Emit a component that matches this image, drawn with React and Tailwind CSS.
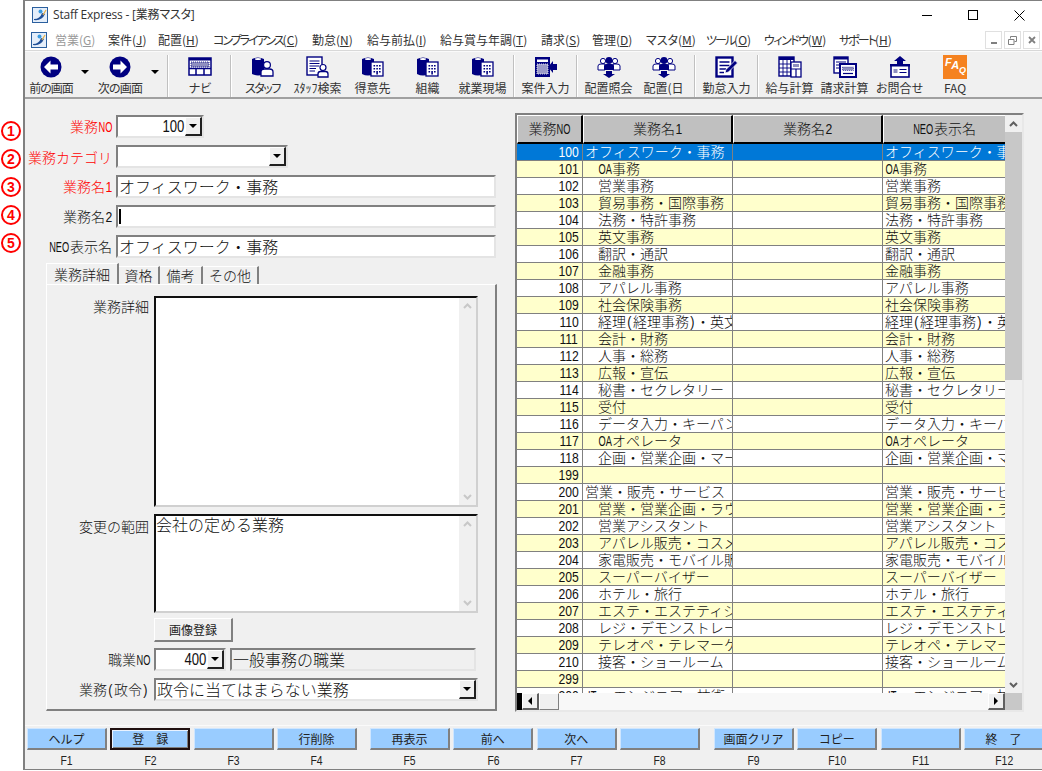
import React from 'react';

const N = '#000080';
const LATIN = "font-['Liberation_Sans',sans-serif] font-normal";

function Mix({ text }) {
  const parts = text.split(/([0-9]+|[A-Z]+|[()]+)/).filter(Boolean);
  return (
    <>
      {parts.map((p, i) => {
        const digit = /^[0-9]+$/.test(p);
        const upper = /^[A-Z]+$/.test(p);
        const paren = /^[()]+$/.test(p);
        if (!digit && !upper && !paren) return <span key={i}>{p}</span>;
        const scale = digit ? 'scale-x-[.87]' : upper ? 'scale-x-[.66]' : 'scale-x-[.9]';
        return (
          <span key={i} className="inline-flex justify-center" style={{ width: p.length * (digit ? 6.9 : 7) }}>
            <span className={`inline-block whitespace-nowrap ${LATIN} ${scale}`}>{p}</span>
          </span>
        );
      })}
    </>
  );
}

const Cyl = () => (
  <>
    <path d="M1 3 Q7 0 13 3 V18 Q7 21 1 18 Z" fill={N} />
    <path d="M4 2.5 Q7 1.5 10 2.5 L10 3.5 Q7 4.5 4 3.5 Z" fill="#fff" />
  </>
);
const Person = () => (
  <>
    <circle cx="16" cy="9" r="3.4" fill="#fff" stroke={N} strokeWidth="1.2" />
    <path d="M10 20 V16 Q10 13 13.5 13 H18.5 Q22 13 22 16 V20 Z" fill="#fff" stroke={N} strokeWidth="1.3" />
  </>
);
const Bldg = () => (
  <>
    <rect x="10" y="6" width="12" height="14" fill="#fff" stroke={N} strokeWidth="1.3" />
    <path d="M12.5 9h1.6v1.6h-1.6zM15.3 9h1.6v1.6h-1.6zM18 9h1.6v1.6H18zM12.5 12h1.6v1.6h-1.6zM15.3 12h1.6v1.6h-1.6zM18 12h1.6v1.6H18zM12.5 15h1.6v1.6h-1.6zM15.3 15h1.6v3.4h-1.6zM18 15h1.6v1.6H18z" fill={N} />
  </>
);
const Group = () => (
  <>
    <circle cx="6" cy="5" r="2.6" fill="#fff" stroke={N} />
    <circle cx="18" cy="5" r="2.6" fill="#fff" stroke={N} />
    <path d="M1 14 V10 Q1 8 4 8 H8 V14 ZM16 8 H20 Q23 8 23 10 V14 H16 Z" fill="#fff" stroke={N} />
    <circle cx="12" cy="4.5" r="3.4" fill={N} />
    <path d="M7 14 V10 Q7 8 9.5 8 H14.5 Q17 8 17 10 V14 Z" fill={N} />
    <path d="M9 15 H15 V18 H18 L12 22 L6 18 H9 Z" fill={N} />
  </>
);
const Svg = ({ w = 24, h = 22, vb = '0 0 24 22', children }) => (
  <svg width={w} height={h} viewBox={vb} className="block">{children}</svg>
);

const icons = {
  back: (
    <Svg vb="0 0 22 22" w={22}>
      <circle cx="11" cy="11" r="10.5" fill={N} />
      <path d="M4 11 L10.5 4.5 V8.5 H18 V13.5 H10.5 V17.5 Z" fill="#fff" />
    </Svg>
  ),
  next: (
    <Svg vb="0 0 22 22" w={22}>
      <circle cx="11" cy="11" r="10.5" fill={N} />
      <path d="M18 11 L11.5 4.5 V8.5 H4 V13.5 H11.5 V17.5 Z" fill="#fff" />
    </Svg>
  ),
  navi: (
    <Svg>
      <rect x="1" y="2" width="22" height="17" fill="#fff" stroke={N} strokeWidth="1.5" />
      <rect x="1" y="2" width="22" height="2.5" fill={N} />
      <rect x="3" y="6" width="18" height="5" fill="#8f8fc0" stroke={N} strokeWidth="0.8" strokeDasharray="1 1" />
      <path d="M1 12.5 H23 M8 12.5 V19 M16 12.5 V19" stroke={N} strokeWidth="1.5" />
    </Svg>
  ),
  staff: <Svg><Cyl /><Person /></Svg>,
  search: (
    <Svg>
      <rect x="1" y="1" width="15" height="18" fill="#fff" stroke={N} strokeWidth="1.4" />
      <path d="M3.5 5H13.5M3.5 7.5H13.5M3.5 10H13.5M3.5 12.5H10M3.5 15H9" stroke={N} strokeWidth="1.1" />
      <circle cx="17" cy="11.5" r="3" fill="#fff" stroke={N} strokeWidth="1.2" />
      <path d="M12 21 V18 Q12 15.5 14.5 15.5 H19.5 Q22 15.5 22 18 V21 Z" fill="#fff" stroke={N} strokeWidth="1.3" />
    </Svg>
  ),
  bldg: <Svg><Cyl /><Bldg /></Svg>,
  input: (
    <Svg>
      <rect x="1" y="1" width="15" height="20" fill={N} />
      <rect x="3" y="3.5" width="11" height="2.5" fill="#fff" />
      <rect x="3" y="8" width="11" height="10" fill="#9a9ac8" stroke="#fff" strokeWidth="0.8" strokeDasharray="1 1" />
      <path d="M23 8 H19 V5 L14 11 L19 17 V14 H23 Z" fill={N} />
    </Svg>
  ),
  group: <Svg><Group /></Svg>,
  edit: (
    <Svg>
      <rect x="1.5" y="1.5" width="16" height="19" fill="#fff" stroke={N} strokeWidth="2.4" />
      <path d="M4.5 6H14.5M4.5 9.5H14.5M4.5 13H11M4.5 16.5H9" stroke={N} strokeWidth="1.6" />
      <path d="M10 17 L11 13.5 L20 4.5 L22.5 7 L13.5 16 Z" fill={N} stroke="#fff" strokeWidth="0.7" />
    </Svg>
  ),
  calc: (
    <Svg>
      <rect x="1" y="1" width="15" height="19" fill="#fff" stroke={N} strokeWidth="1.4" />
      <rect x="1" y="1" width="15" height="3" fill={N} />
      <path d="M1 8H16M1 12H16M1 16H16M5 4V20M9 4V20M12.5 4V20" stroke={N} strokeWidth="0.9" />
      <rect x="13" y="6" width="10" height="15" fill="#fff" stroke={N} strokeWidth="1.3" />
      <rect x="15" y="8" width="6" height="3" fill="#8f8fc0" />
      <path d="M13 13H23M18 13V21" stroke={N} strokeWidth="1.2" />
    </Svg>
  ),
  invoice: (
    <Svg>
      <rect x="1" y="1" width="14" height="16" fill="#fff" stroke={N} strokeWidth="1.4" />
      <rect x="1" y="1" width="14" height="2.5" fill={N} />
      <path d="M3 6H13M3 9H8M3 12H8" stroke={N} strokeWidth="1" />
      <rect x="7" y="8" width="16" height="13" fill="#fff" stroke={N} strokeWidth="2" />
      <rect x="9.5" y="11" width="11" height="3.5" fill="#8f8fc0" stroke={N} strokeWidth="0.5" strokeDasharray="1 1" />
      <path d="M10 17.5H20" stroke={N} strokeWidth="1.2" />
    </Svg>
  ),
  ask: (
    <Svg>
      <path d="M12 0 L18 5 H15 V8 H9 V5 H6 Z" fill={N} />
      <rect x="3" y="9" width="18" height="12" fill="#fff" stroke={N} strokeWidth="1.6" />
      <rect x="2" y="8" width="20" height="2.5" fill={N} />
      <rect x="5.5" y="13" width="4" height="4" fill="#8f8fc0" />
      <path d="M11.5 13.5H18.5M11.5 16.5H18.5" stroke={N} strokeWidth="1.1" />
    </Svg>
  ),
};

const Logo = () => (
  <svg width="16" height="16" viewBox="0 0 16 16" className="block">
    <rect x="0.5" y="0.5" width="15" height="15" fill="#e4eefa" stroke="#2a5f9e" />
    <circle cx="8.5" cy="4.5" r="2" fill="#3a9be0" />
    <path d="M2 12 Q8 12 10 6 L13 7 Q10 14 2 13Z" fill="#1f4f98" />
    <path d="M11 8 L14 3" stroke="#e8b040" strokeWidth="1.2" />
  </svg>
);

function Tool({ icon, label, w = 'w-[55px]', tc = '' }) {
  return (
    <div className={`${w} flex flex-col items-center shrink-0`}>
      <div className="h-[24px] flex items-center justify-center">{icon}</div>
      <div className={`text-[12px] leading-[17px] text-[#333] whitespace-nowrap [font-feature-settings:'palt'] ${tc}`}>{label}</div>
    </div>
  );
}
const Sep = ({ cls = 'mx-[3px]' }) => <div className={`${cls} w-[2px] h-[42px] shrink-0 bg-[#c0c0c0] border-r border-white`} />;
const Drop = () => (
  <div className="w-[14px] h-[46px] shrink-0 flex items-center justify-center pb-[12px]">
    <div className="w-0 h-0 border-x-[4px] border-x-transparent border-t-[4px] border-t-black" />
  </div>
);

const menus = [
  ['案件', 'J', 'w-[50px]', ''],
  ['配置', 'H', 'w-[55px]', ''],
  ['コンプライアンス', 'C', 'w-[99px]', 'tracking-[-2px]'],
  ['勤怠', 'N', 'w-[55px]', ''],
  ['給与前払', 'I', 'w-[73px]', ''],
  ['給与賞与年調', 'T', 'w-[101px]', ''],
  ['請求', 'S', 'w-[51px]', ''],
  ['管理', 'D', 'w-[54px]', ''],
  ['マスタ', 'M', 'w-[60px]', ''],
  ['ツール', 'O', 'w-[58px]', 'tracking-[-2px]'],
  ['ウィンドウ', 'W', 'w-[75px]', 'tracking-[-1.5px]'],
  ['サポート', 'H', 'w-[60px]', 'tracking-[-2px]'],
];

const Inset = ({ className = '', children }) => (
  <div className={`border-2 border-t-[#808080] border-l-[#808080] border-r-[#e4e4e4] border-b-[#e4e4e4] ${className}`}>{children}</div>
);
const DropBtn = () => (
  <div className="w-[17px] self-stretch bg-[#f0f0f0] border-r-2 border-b-2 border-r-[#202020] border-b-[#202020] border-t border-l border-t-white border-l-white flex items-center justify-center shrink-0">
    <div className="w-0 h-0 border-x-[4px] border-x-transparent border-t-[4px] border-t-black" />
  </div>
);
const Label = ({ red, children, className = '' }) => (
  <div className={`text-[14px] leading-[20px] font-light whitespace-nowrap text-right ${red ? 'text-[#ff0000]' : 'text-[#111]'} ${className}`}>
    <Mix text={children} />
  </div>
);
const Row = ({ label, red, children }) => (
  <div className="flex items-center h-[23px]">
    <div className="w-[87px] flex justify-end"><Label red={red}>{label}</Label></div>
    <div className="ml-[4px] flex-1 h-full">{children}</div>
  </div>
);
const Chev = ({ up }) => (
  <svg width="9" height="6" viewBox="0 0 9 6" className="block">
    <path d={up ? 'M1 5 L4.5 1.5 L8 5' : 'M1 1 L4.5 4.5 L8 1'} fill="none" stroke="#c8c8c8" strokeWidth="2" />
  </svg>
);
const Memo = ({ className, text }) => (
  <div className={`flex w-[324px] bg-white border-2 border-t-[#101010] border-l-[#101010] border-r-[#d0d0d0] border-b-[#d0d0d0] ${className}`}>
    <div className="flex-1 text-[16px] leading-[16px] font-light text-[#111] whitespace-nowrap">{text}</div>
    <div className="w-[17px] bg-[#f0f0f0] flex flex-col items-center justify-between py-[5px]">
      <Chev up /><Chev />
    </div>
  </div>
);
const NumBox = ({ children }) => (
  <div className="flex-1 flex justify-end pr-[1px] text-[16px] leading-[19px] text-[#111]">
    <span className="inline-flex justify-center w-[22px]">
      <span className={`inline-block ${LATIN} scale-x-[.82]`}>{children}</span>
    </span>
  </div>
);

const rows = [
  ['100', 'オフィスワーク・事務', 0], ['101', 'OA事務'], ['102', '営業事務'], ['103', '貿易事務・国際事務'], ['104', '法務・特許事務'],
  ['105', '英文事務'], ['106', '翻訳・通訳'], ['107', '金融事務'], ['108', 'アパレル事務'], ['109', '社会保険事務'],
  ['110', '経理(経理事務)・英文経理'], ['111', '会計・財務'], ['112', '人事・総務'], ['113', '広報・宣伝'], ['114', '秘書・セクレタリー'],
  ['115', '受付'], ['116', 'データ入力・キーパンチ'], ['117', 'OAオペレータ'], ['118', '企画・営業企画・マーケティング'], ['199', ''],
  ['200', '営業・販売・サービス', 0], ['201', '営業・営業企画・ラウンダー'], ['202', '営業アシスタント'], ['203', 'アパレル販売・コスメ'],
  ['204', '家電販売・モバイル販売'], ['205', 'スーパーバイザー'], ['206', 'ホテル・旅行'], ['207', 'エステ・エステティシャン'],
  ['208', 'レジ・デモンストレーター'], ['209', 'テレオペ・テレマーケティング'], ['210', '接客・ショールーム'], ['299', ''],
  ['300', 'IT・エンジニア・技術', 0],
];

const Head = ({ w, children }) => (
  <div className={`${w} shrink-0 h-[29px] pb-[1px] bg-[#c0c0c0] border-t border-l border-t-white border-l-white border-r-2 border-b-2 border-r-black border-b-black flex items-center justify-center text-[14px] font-light text-[#111]`}>
    <span><Mix text={children} /></span>
  </div>
);

function GridRow({ no, name, indent, i }) {
  const bg = i === 0 ? 'bg-[#0078d7] text-white' : i % 2 === 1 ? 'bg-[#ffffcc] text-[#111]' : 'bg-white text-[#111]';
  return (
    <div className={`flex h-[17px] shrink-0 border-b border-[#808080] text-[14px] leading-[14px] font-light ${bg}`}>
      <div className="w-[66px] shrink-0 border-r border-[#808080] text-right pr-[3px]"><Mix text={no} /></div>
      <div className={`w-[150px] shrink-0 border-r border-[#808080] overflow-hidden whitespace-nowrap ${indent === 0 ? 'pl-[2px]' : 'pl-[15px]'}`}><Mix text={name} /></div>
      <div className="w-[150px] shrink-0 border-r border-[#808080]" />
      <div className="w-[124px] shrink-0 overflow-hidden whitespace-nowrap pl-[2px]"><Mix text={name} /></div>
    </div>
  );
}

const Arrow = ({ dir }) => (
  <div className="w-[17px] h-full shrink-0 bg-[#f0f0f0] border-t border-l border-t-white border-l-white border-r-2 border-b-2 border-r-[#606060] border-b-[#606060] flex items-center justify-center">
    <div className={dir === 'l'
      ? 'w-0 h-0 border-y-[4px] border-y-transparent border-r-[4px] border-r-black'
      : 'w-0 h-0 border-y-[4px] border-y-transparent border-l-[4px] border-l-black'} />
  </div>
);

function FKey({ label, f, active }) {
  return (
    <div className="w-[80px] shrink-0 flex flex-col items-center">
      <div className={`w-full h-[23px] bg-[#99ccff] flex items-center justify-center text-[12px] text-[#222] whitespace-pre ${active
        ? 'border-2 border-[#201010] shadow-[inset_1px_1px_0_#e8f2ff,inset_-1px_-1px_0_#808080]'
        : 'border-t border-l border-t-[#cfe6ff] border-l-[#cfe6ff] border-r-2 border-b-2 border-r-[#808080] border-b-[#808080]'}`}>{label}</div>
      <div className={`${LATIN} inline-block scale-x-[.8] text-[13px] leading-[17px] mt-[2px] text-[#222]`}>{f}</div>
    </div>
  );
}
const FGroup = ({ className = '', keys }) => (
  <div className={`flex gap-[3.33px] shrink-0 ${className}`}>
    {keys.map(([l, f, a]) => <FKey key={f} label={l} f={f} active={a} />)}
  </div>
);

const MdiBtn = ({ children }) => (
  <div className="w-[17px] h-[18px] border border-[#e0e0e0] flex items-center justify-center">{children}</div>
);

export default function App() {
  return (
    <div className="w-[1042px] h-[771px] flex bg-white overflow-hidden font-['Noto_Sans_CJK_JP',sans-serif]">
      <div className="w-[23px] shrink-0 pt-[121px] pl-[1px] flex flex-col gap-[8px]">
        {[1, 2, 3, 4, 5].map((n) => (
          <div key={n} className="w-[20px] h-[20px] rounded-full border-2 border-[#ff0000] text-[#ff0000] font-['Liberation_Sans'] font-bold text-[14px] leading-[16px] text-center">{n}</div>
        ))}
      </div>

      <div className="w-[1019px] h-[770px] flex flex-col bg-[#f0f0f0] border-t border-l-2 border-b border-[#808080] overflow-hidden">
        {/* title bar */}
        <div className="h-[27px] shrink-0 bg-white flex items-center pl-[7px] pt-[1px]">
          <Logo />
          <div className="ml-[5px] text-[12px] text-[#333] font-['Open_Sans','Noto_Sans_CJK_JP',sans-serif] tracking-[-0.2px] [font-feature-settings:'palt']">Staff Express - [業務マスタ]</div>
          <div className="ml-auto flex h-full">
            <div className="w-[46px] flex items-center justify-center">
              <div className="w-[10px] h-px bg-black" />
            </div>
            <div className="w-[46px] flex items-center justify-center">
              <div className="w-[10px] h-[10px] border border-black" />
            </div>
            <div className="w-[46px] flex items-center justify-center">
              <svg width="11" height="11" viewBox="0 0 11 11"><path d="M0.5 0.5L10.5 10.5M10.5 0.5L0.5 10.5" stroke="#000" /></svg>
            </div>
          </div>
        </div>
        {/* menu */}
        <div className="h-[23px] shrink-0 bg-white flex items-center pl-[6px] pt-[2px] text-[12px] text-[#333] [font-feature-settings:'palt'] border-b border-[#d8d8d8]">
          <Logo />
          <span className="ml-[8px] w-[53px] text-[#999] whitespace-nowrap">営業(<u>G</u>)</span>
          {menus.map(([a, b, w, t]) => (
            <span key={a} className={`${w} shrink-0 whitespace-nowrap`}><span className={t}>{a}</span>(<u>{b}</u>)</span>
          ))}
          <div className="ml-auto mr-[2px] flex gap-[2px]">
            <MdiBtn><div className="w-[6px] h-[2px] mt-[5px] bg-[#808080]" /></MdiBtn>
            <MdiBtn><svg width="9" height="9" viewBox="0 0 9 9"><path d="M2.5 2.5V.5H8.5V5.5H6.5M.5 3.5H6V8.5H.5Z" fill="none" stroke="#808080" /></svg></MdiBtn>
            <MdiBtn><svg width="8" height="8" viewBox="0 0 8 8"><path d="M1 1L7 7M7 1L1 7" stroke="#808080" strokeWidth="1.8" /></svg></MdiBtn>
          </div>
        </div>
        {/* toolbar */}
        <div className="h-[48px] shrink-0 flex items-start pt-[3px] pl-[1px] border-b-2 border-[#a0a0a0] bg-[#f0f0f0] border-t border-t-[#fafafa]">
          <Tool icon={icons.back} label="前の画面" w="w-[50px]" tc="tracking-[-1px]" />
          <div className="ml-[2px]"><Drop /></div>
          <div className="ml-[3px]"><Tool icon={icons.next} label="次の画面" w="w-[50px]" tc="tracking-[-0.8px]" /></div>
          <div className="ml-[3px]"><Drop /></div>
          <Sep cls="ml-[5px] mr-[1px]" />
          <Tool icon={icons.navi} label="ナビ" w="w-[60px]" />
          <Sep cls="mr-[3px]" />
          <Tool icon={icons.staff} label="スタッフ" tc="tracking-[-1.5px]" />
          <Tool icon={icons.search} label="ｽﾀｯﾌ検索" />
          <Tool icon={icons.bldg} label="得意先" />
          <Tool icon={icons.bldg} label="組織" />
          <Tool icon={icons.bldg} label="就業現場" />
          <Sep />
          <Tool icon={icons.input} label="案件入力" />
          <Sep />
          <Tool icon={icons.group} label="配置照会" />
          <Tool icon={icons.group} label="配置(日" />
          <Sep />
          <Tool icon={icons.edit} label="勤怠入力" />
          <Sep />
          <Tool icon={icons.calc} label="給与計算" />
          <Tool icon={icons.invoice} label="請求計算" />
          <Tool icon={icons.ask} label="お問合せ" />
          <Tool
            w="w-[56px]"
            label="FAQ"
            icon={
              <div className="w-[24px] h-[24px] bg-[#f58220] text-white font-['Liberation_Sans'] italic font-bold text-[11px] leading-[8px] pl-[2px] pt-[3px]">
                F<span className="relative top-[3px]">A</span><span className="relative top-[7px] text-[9px]">Q</span>
              </div>
            }
          />
        </div>
        {/* content */}
        <div className="flex-1 min-h-0 flex">
          <div className="w-[490px] shrink-0 pt-[16px] flex flex-col">
            <div className="flex flex-col gap-[7px]">
              <Row label="業務NO" red>
                <Inset className="w-[88px] h-full flex bg-white">
                  <NumBox>100</NumBox>
                  <DropBtn />
                </Inset>
              </Row>
              <Row label="業務カテゴリ" red>
                <Inset className="w-[172px] h-full flex bg-white">
                  <div className="flex-1" />
                  <DropBtn />
                </Inset>
              </Row>
              {[['業務名1', 'オフィスワーク・事務', true], ['業務名2', '', false], ['NEO表示名', 'オフィスワーク・事務', false]].map(([l, v, r], i) => (
                <Row key={l} label={l} red={r}>
                  <Inset className="w-[380px] h-full bg-white text-[16px] leading-[19px] font-light text-[#111] pl-[1px] whitespace-nowrap">
                    {i === 1 ? <div className="w-[2px] h-[15px] mt-[2px] bg-black" /> : v}
                  </Inset>
                </Row>
              ))}
            </div>
            {/* tabs */}
            <div className="ml-[21px] mt-[5px] flex items-end h-[21px] text-[14px] font-light text-[#111] relative z-10">
              <div className="w-[73px] h-[21px] bg-[#f0f0f0] border-t border-l border-t-white border-l-white border-r-2 border-r-[#808080] flex items-center justify-center">業務詳細</div>
              <div className="w-[41px] h-[18px] border-t border-t-white border-r-2 border-r-[#808080] flex items-center justify-center">資格</div>
              <div className="w-[43px] h-[18px] border-t border-t-white border-r-2 border-r-[#808080] flex items-center justify-center">備考</div>
              <div className="w-[56px] h-[18px] border-t border-t-white border-r-2 border-r-[#808080] flex items-center justify-center">その他</div>
            </div>
            {/* pane */}
            <div className="ml-[21px] w-[451px] h-[427px] border-t border-l border-t-white border-l-white border-r-2 border-b-2 border-r-[#808080] border-b-[#808080] flex flex-col pt-[11px]">
              <div className="flex">
                <Label className="w-[102px]">業務詳細</Label>
                <Memo className="ml-[5px] h-[211px]" text="" />
              </div>
              <div className="flex mt-[7px]">
                <Label className="w-[102px] pt-[2px]">変更の範囲</Label>
                <Memo className="ml-[5px] h-[99px]" text="会社の定める業務" />
              </div>
              <div className="ml-[107px] mt-[5px] w-[79px] h-[24px] bg-[#f0f0f0] border-t border-l border-t-white border-l-white border-r-2 border-b-2 border-r-[#808080] border-b-[#808080] flex items-center justify-center text-[12px] text-[#222]">画像登録</div>
              <div className="flex items-center h-[23px] mt-[6px]">
                <Label className="w-[103px]">職業NO</Label>
                <Inset className="ml-[4px] w-[72px] h-full flex bg-white">
                  <NumBox>400</NumBox>
                  <DropBtn />
                </Inset>
                <Inset className="ml-[4px] w-[246px] h-full text-[16px] leading-[18px] font-light text-[#111] pl-[1px] whitespace-nowrap">一般事務の職業</Inset>
              </div>
              <div className="flex items-center h-[23px] mt-[7px]">
                <Label className="w-[102px]">業務(政令)</Label>
                <Inset className="ml-[5px] w-[324px] h-full flex bg-white">
                  <div className="flex-1 text-[16px] leading-[18px] font-light text-[#111] pl-[1px] whitespace-nowrap">政令に当てはまらない業務</div>
                  <DropBtn />
                </Inset>
              </div>
            </div>
          </div>

          {/* grid */}
          <div className="mt-[14px] w-[509px] h-[599px] shrink-0 border-2 border-t-[#808080] border-l-[#808080] border-r-[#e8e8e8] border-b-[#e8e8e8] flex flex-col bg-white">
            <div className="flex-1 min-h-0 flex overflow-hidden">
              <div className="w-[488px] shrink-0 flex flex-col overflow-hidden">
                <div className="flex shrink-0">
                  <Head w="w-[66px]">業務NO</Head>
                  <Head w="w-[150px]">業務名1</Head>
                  <Head w="w-[150px]">業務名2</Head>
                  <Head w="w-[124px]">NEO表示名</Head>
                </div>
                {rows.map(([no, name, indent], i) => (
                  <GridRow key={no} no={no} name={name} indent={indent} i={i} />
                ))}
              </div>
              <div className="w-[17px] shrink-0 bg-[#f0f0f0] flex flex-col">
                <div className="h-[17px] flex items-center justify-center shrink-0">
                  <svg width="9" height="6" viewBox="0 0 9 6"><path d="M1 5 L4.5 1.5 L8 5" fill="none" stroke="#606060" strokeWidth="2" /></svg>
                </div>
                <div className="h-[248px] bg-[#c8c8c8] shrink-0" />
                <div className="mt-auto h-[17px] flex items-center justify-center shrink-0">
                  <svg width="9" height="6" viewBox="0 0 9 6"><path d="M1 1 L4.5 4.5 L8 1" fill="none" stroke="#606060" strokeWidth="2" /></svg>
                </div>
              </div>
            </div>
            <div className="h-[17px] shrink-0 flex bg-[#f8f8f8]">
              <div className="w-[5px] h-full bg-black shrink-0" />
              <Arrow dir="l" />
              <div className="w-[20px] h-full shrink-0 bg-[#f0f0f0] border-t border-l border-t-white border-l-white border-r border-b border-r-[#808080] border-b-[#808080]" />
              <div className="flex-1" />
              <Arrow dir="r" />
              <div className="w-[17px] h-full shrink-0 bg-[#c8c8c8]" />
            </div>
          </div>
        </div>
        {/* function keys */}
        <div className="h-[44px] shrink-0 pt-[2px] pl-[2px] flex border-t border-t-[#fafafa] bg-[#f0f0f0]">
          <FGroup keys={[['ヘルプ', 'F1'], ['登　録', 'F2', true], ['', 'F3'], ['行削除', 'F4']]} />
          <FGroup className="ml-[13px]" keys={[['再表示', 'F5'], ['前へ', 'F6'], ['次へ', 'F7'], ['', 'F8']]} />
          <FGroup className="ml-[14px]" keys={[['画面クリア', 'F9'], ['コピー', 'F10'], ['', 'F11'], ['終　了', 'F12']]} />
        </div>
      </div>
    </div>
  );
}
